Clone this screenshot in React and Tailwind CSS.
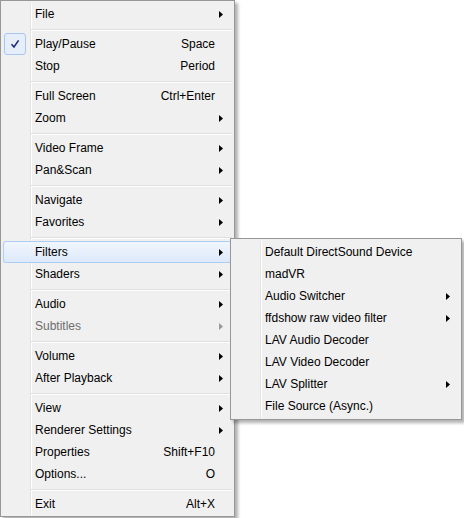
const mainItems = [
  { label: 'File', sub: true },
  'sep',
  { label: 'Play/Pause', shortcut: 'Space', checked: true },
  { label: 'Stop', shortcut: 'Period' },
  'sep',
  { label: 'Full Screen', shortcut: 'Ctrl+Enter' },
  { label: 'Zoom', sub: true },
  'sep',
  { label: 'Video Frame', sub: true },
  { label: 'Pan&Scan', sub: true },
  'sep',
  { label: 'Navigate', sub: true },
  { label: 'Favorites', sub: true },
  'sep',
  { label: 'Filters', sub: true, active: true },
  { label: 'Shaders', sub: true },
  'sep',
  { label: 'Audio', sub: true },
  { label: 'Subtitles', sub: true, disabled: true },
  'sep',
  { label: 'Volume', sub: true },
  { label: 'After Playback', sub: true },
  'sep',
  { label: 'View', sub: true },
  { label: 'Renderer Settings', sub: true },
  { label: 'Properties', shortcut: 'Shift+F10' },
  { label: 'Options...', shortcut: 'O' },
  'sep',
  { label: 'Exit', shortcut: 'Alt+X' },
];

const filterItems = [
  { label: 'Default DirectSound Device' },
  { label: 'madVR' },
  { label: 'Audio Switcher', sub: true },
  { label: 'ffdshow raw video filter', sub: true },
  { label: 'LAV Audio Decoder' },
  { label: 'LAV Video Decoder' },
  { label: 'LAV Splitter', sub: true },
  { label: 'File Source (Async.)' },
];

function Arrow({ disabled }) {
  return (
    <svg width="4" height="7" viewBox="0 0 4 7" className="block">
      <path d="M0 0 L4 3.5 L0 7 Z" fill={disabled ? '#9a9a9a' : '#000'} />
    </svg>
  );
}

function Separator() {
  return (
    <div className="h-[8px] pt-[4px] pl-[28px]">
      <div className="h-px bg-[#e0e0e0]" />
      <div className="h-px bg-white" />
    </div>
  );
}

function MenuItem({ item }) {
  return (
    <div
      className={
        'flex h-[22px] items-center rounded-[3px] ' +
        (item.active
          ? 'bg-gradient-to-b from-[#f2f7fe] to-[#dce8f9] shadow-[inset_0_0_0_1px_#aecdf3]'
          : '')
      }
    >
      <div className="flex h-[22px] w-[32px] shrink-0 items-center pl-px">
        {item.checked && (
          <div className="flex h-[22px] w-[22px] items-center justify-center rounded-[3px] border border-[#a9c7ee] bg-[#e6eefb]">
            <svg width="10" height="10" viewBox="0 0 10 10">
              <path d="M1.5 5.2 L4 8 L8.6 1.4" fill="none" stroke="#1d2a7a" strokeWidth="1.6" />
            </svg>
          </div>
        )}
      </div>
      <span className={'flex-1 whitespace-nowrap ' + (item.disabled ? 'text-[#6d6d6d]' : 'text-black')}>
        {item.label}
      </span>
      {item.shortcut && <span className="whitespace-nowrap text-black">{item.shortcut}</span>}
      <div className="flex w-[17px] shrink-0 items-center pl-[4px]">
        {item.sub && <Arrow disabled={item.disabled} />}
      </div>
    </div>
  );
}

function Menu({ items, className }) {
  return (
    <div
      className={
        'relative border border-[#979797] bg-[#f0f0f0] px-[2px] pt-[2px] shadow-[3px_3px_3px_rgba(0,0,0,0.3)] ' +
        className
      }
    >
      <div className="absolute top-[2px] bottom-[1px] left-[29px] w-[2px] border-l border-[#e2e3e3] bg-white" />
      <div className="relative">
        {items.map((item, i) =>
          item === 'sep' ? <Separator key={i} /> : <MenuItem key={i} item={item} />
        )}
      </div>
    </div>
  );
}

export default function App() {
  return (
    <div
      className="relative h-[518px] w-[464px] overflow-hidden bg-white text-[12px] leading-none"
      style={{ fontFamily: '"Liberation Sans", Arial, sans-serif' }}
    >
      <Menu items={mainItems} className="w-[235px] pb-[1px]" />
      <Menu items={filterItems} className="!absolute left-[230px] top-[238px] w-[232px] pb-[2px]" />
    </div>
  );
}
